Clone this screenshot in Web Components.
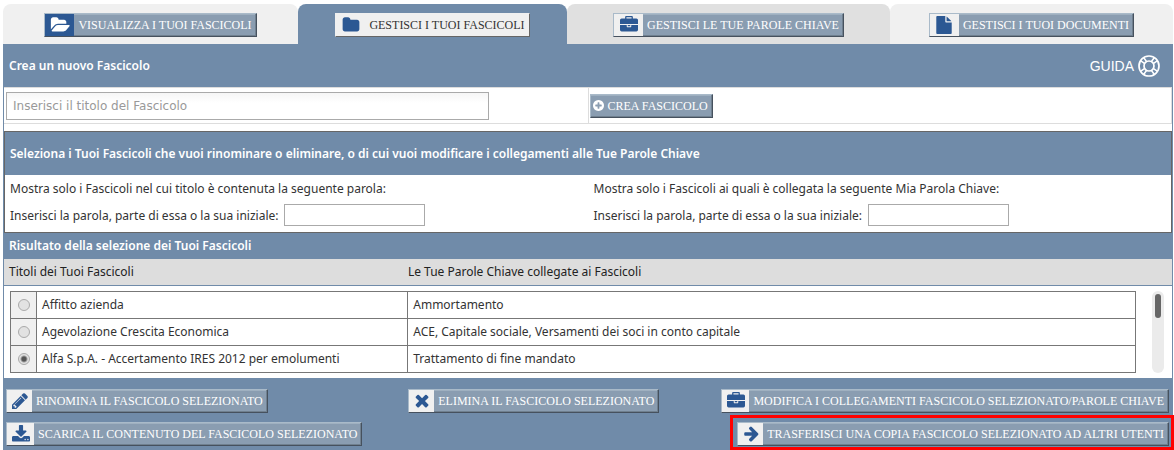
<!DOCTYPE html>
<html lang="it">
<head>
<meta charset="utf-8">
<title>Gestisci i tuoi fascicoli</title>
<style>
    body{
    margin: 0;
    background: white;
    color: #333;
    font-family: "Noto Sans", "Open Sans", sans-serif;
    font-size: 12px;
    }
</style>
</head>
<body>
<fascicoli-pagina></fascicoli-pagina>

<script>
const icons = {
    "folder-open": ["0 0 1943 1792", "M1943 952q0 31-31 66l-336 396q-43 51-120.5 86.5t-143.5 35.5h-1088q-34 0-60.5-13t-26.5-43q0-31 31-66l336-396q43-51 120.5-86.5t143.5-35.5h1088q34 0 60.5 13t26.5 43zm-343-344v160h-832q-94 0-197 47.5t-164 119.5l-337 396-5 6q0-4-.5-12.5t-.5-12.5v-960q0-92 66-158t158-66h320q92 0 158 66t66 158v32h544q92 0 158 66t66 158z"],
    "folder": ["64 0 1664 1792", "M1728 608v704q0 92-66 158t-158 66h-1216q-92 0-158-66t-66-158v-960q0-92 66-158t158-66h320q92 0 158 66t66 158v32h672q92 0 158 66t66 158z"],
    "briefcase": ["0 0 1792 1792", "M640 256h512v-128h-512v128zm1152 640v480q0 66-47 113t-113 47h-1472q-66 0-113-47t-47-113v-480h672v160q0 26 19 45t45 19h320q26 0 45-19t19-45v-160h672zm-768 0v128h-256v-128h256zm768-480v384h-1792v-384q0-66 47-113t113-47h352v-160q0-40 28-68t68-28h576q40 0 68 28t28 68v160h352q66 0 113 47t47 113z"],
    "file": ["0 0 1536 1792", "M1024 512v-472q22 14 36 28l408 408q14 14 28 36h-472zm-128 32q0 40 28 68t68 28h544v1056q0 40-28 68t-68 28h-1344q-40 0-68-28t-28-68v-1600q0-40 28-68t68-28h800v544z"],
    "pencil": ["128 128 1536 1536", "M491 1536l91-91-235-235-91 91v107h128v128h107zm523-928q0-22-22-22-10 0-17 7l-542 542q-7 7-7 17 0 22 22 22 10 0 17-7l542-542q7-7 7-17zm-54-192l416 416-832 832h-416v-416zm683 96q0 53-37 90l-166 166-416-416 166-165q36-38 90-38 53 0 91 38l235 234q37 39 37 91z"],
    "times": ["147 207 1490 1490", "M1490 1322q0 40-28 68l-136 136q-28 28-68 28t-68-28l-294-294-294 294q-28 28-68 28t-68-28l-136-136q-28-28-28-68t28-68l294-294-294-294q-28-28-28-68t28-68l136-136q28-28 68-28t68 28l294 294 294-294q28-28 68-28t68 28l136 136q28 28 28 68t-28 68l-294 294 294 294q28 28 28 68z"],
    "arrow": ["0 128 1664 1664", "M1600 960q0 54-37 91l-651 651q-39 37-91 37-51 0-90-37l-75-75q-38-38-38-91t38-91l293-293h-704q-52 0-84.5-37.5t-32.5-90.5v-128q0-53 32.5-90.5t84.5-37.5h704l-293-294q-38-36-38-90t38-90l75-75q38-38 90-38 53 0 91 38l651 651q37 35 37 90z"],
    "download": ["64 0 1664 1664", "M1344 1344q0-26-19-45t-45-19-45 19-19 45 19 45 45 19 45-19 19-45zm256 0q0-26-19-45t-45-19-45 19-19 45 19 45 45 19 45-19 19-45zm128-224v320q0 40-28 68t-68 28h-1472q-40 0-68-28t-28-68v-320q0-40 28-68t68-28h465l135 136q58 56 136 56t136-56l136-136h464q40 0 68 28t28 68zm-325-569q17 41-14 70l-448 448q-18 19-45 19t-45-19l-448-448q-31-29-14-70 17-39 59-39h256v-448q0-26 19-45t45-19h256q26 0 45 19t19 45v448h256q42 0 59 39z"],
    "plus": ["128 128 1536 1536", "M1344 960v-128q0-26-19-45t-45-19h-256v-256q0-26-19-45t-45-19h-128q-26 0-45 19t-19 45v256h-256q-26 0-45 19t-19 45v128q0 26 19 45t45 19h256v256q0 26 19 45t45 19h128q26 0 45-19t19-45v-256h256q26 0 45-19t19-45zm320-64q0 209-103 385.5t-279.5 279.5-385.5 103-385.5-103-279.5-279.5-103-385.5 103-385.5 279.5-279.5 385.5-103 385.5 103 279.5 279.5 103 385.5z"]
}

function makeTemplate(html) {
    const template = document.createElement("template")
    template.innerHTML = html
    return template
}

// button with an icon box on the left
const buttonTemplate = makeTemplate(`
    <style>
        :host{
        display: block;
        }
        button{
        display: flex;
        align-items: stretch;
        box-sizing: border-box;
        height: 24px;
        padding: 0;
        border: 1px solid;
        border-color: #a9bac9 #46515e #46515e #a9bac9;
        background: #8a9db1;
        box-shadow: inset -1px -1px #70808f, inset 0 1px #9fb0c0;
        color: white;
        font-family: "Liberation Serif", serif;
        font-size: 12px;
        line-height: 22px;
        white-space: nowrap;
        cursor: pointer;
        }
        .box{
        display: flex;
        align-items: center;
        justify-content: center;
        width: 25px;
        background: #f0f0f0;
        color: #2c5893;
        }
        svg{
        width: 16px;
        height: 16px;
        fill: currentColor;
        }
        .text{
        padding: 0 4px;
        }
        :host([size="wide"]) .box{
        width: 29px;
        }
        :host([size="wide"]) svg, :host([size="large"]) svg{
        width: 18px;
        height: 18px;
        }
        :host([size="large"]) .box{
        width: 27px;
        }
        :host([tone="blue"]) .box{
        background: #2c5893;
        color: white;
        }
        :host([tone="blue"]) svg{
        width: 20px;
        }
        :host([tone="light"]) button{
        background: #f0f0f0;
        box-shadow: none;
        color: #333;
        border-color: #f0f0f0 #666 #666 #f0f0f0;
        }
        :host([tone="plain"]) .box{
        width: 16px;
        background: none;
        color: white;
        }
        :host([tone="plain"]) svg{
        width: 11px;
        height: 11px;
        }
        :host([tone="plain"]) .text{
        padding-left: 1px;
        }
    </style>
    <button type="button"><span class="box"><svg aria-hidden="true"><path/></svg></span><span class="text"><slot></slot></span></button>`)

class IconaBottone extends HTMLElement {
    constructor(){
        super()
        const shadow = this.attachShadow({ mode: "open" })
        shadow.append(buttonTemplate.content.cloneNode(true))
    }
    connectedCallback(){
        const [box, path] = icons[this.getAttribute("icon")]
        this.shadowRoot.querySelector("svg").setAttribute("viewBox", box)
        this.shadowRoot.querySelector("path").setAttribute("d", path)
    }
}
customElements.define("icona-bottone", IconaBottone)


// tab
const tabTemplate = makeTemplate(`
    <style>
        :host{
        display: flex;
        justify-content: center;
        box-sizing: border-box;
        height: 40px;
        padding-top: 9px;
        border-radius: 8px 8px 0 0;
        background: #f0f0f0;
        }
        :host([shade]){
        background: #e0e0e0;
        }
        :host([active]){
        background: #708ba9;
        }
    </style>
    <slot></slot>`)

class SchedaTab extends HTMLElement {
    constructor(){
        super()
        this.attachShadow({ mode: "open" }).append(tabTemplate.content.cloneNode(true))
    }
}
customElements.define("scheda-tab", SchedaTab)


// blue title bar
const barTemplate = makeTemplate(`
    <style>
        :host{
        display: flex;
        align-items: center;
        justify-content: space-between;
        box-sizing: border-box;
        min-height: 43px;
        padding: 0 12px 0 5px;
        background: #708ba9;
        color: white;
        }
        :host([small]){
        min-height: 26px;
        }
        h2{
        margin: 0;
        font-size: 12px;
        line-height: 18px;
        font-weight: 600;
        }
    </style>
    <h2><slot></slot></h2><slot name="end"></slot>`)

class BarraTitolo extends HTMLElement {
    constructor(){
        super()
        this.attachShadow({ mode: "open" }).append(barTemplate.content.cloneNode(true))
    }
}
customElements.define("barra-titolo", BarraTitolo)


const guideTemplate = makeTemplate(`
    <style>
        :host{
        display: block;
        }
        a{
        display: flex;
        align-items: center;
        gap: 4px;
        color: white;
        font-family: "Liberation Sans", sans-serif;
        font-size: 14px;
        text-decoration: none;
        }
        svg{
        width: 22px;
        height: 22px;
        fill: none;
        stroke: white;
        }
    </style>
    <a href="#guida">GUIDA
        <svg viewBox="0 0 22 22" aria-hidden="true">
            <circle cx="11" cy="11" r="10" stroke-width="1.7"/>
            <circle cx="11" cy="11" r="5" stroke-width="1.7"/>
            <path stroke-width="1.5" d="M5.8 2.8l2.9 4M2.8 5.8l4 2.9M16.2 2.8l-2.9 4M19.2 5.8l-4 2.9M5.8 19.2l2.9-4M2.8 16.2l4-2.9M16.2 19.2l-2.9-4M19.2 16.2l-4-2.9"/>
        </svg>
    </a>`)

class GuidaLink extends HTMLElement {
    constructor(){
        super()
        this.attachShadow({ mode: "open" }).append(guideTemplate.content.cloneNode(true))
    }
}
customElements.define("guida-link", GuidaLink)


// filter: a line of text and a labelled field
const filterTemplate = makeTemplate(`
    <style>
        :host{
        display: block;
        }
        p{
        margin: 0;
        line-height: 28px;
        }
        div{
        display: flex;
        align-items: center;
        gap: 6px;
        height: 24px;
        }
        input{
        box-sizing: border-box;
        width: 141px;
        height: 22px;
        border: 1px solid #aaa;
        background: white;
        font: inherit;
        }
    </style>
    <p><slot></slot></p>
    <div><label for="parola">Inserisci la parola, parte di essa o la sua iniziale:</label><input id="parola" type="text"></div>`)

class FiltroParola extends HTMLElement {
    constructor(){
        super()
        this.attachShadow({ mode: "open" }).append(filterTemplate.content.cloneNode(true))
    }
}
customElements.define("filtro-parola", FiltroParola)


// results
const fascicoli = [
    ["Affitto azienda", "Ammortamento"],
    ["Agevolazione Crescita Economica", "ACE, Capitale sociale, Versamenti dei soci in conto capitale"],
    ["Alfa S.p.A. - Accertamento IRES 2012 per emolumenti", "Trattamento di fine mandato"]
]

const tableTemplate = makeTemplate(`
    <style>
        :host{
        display: flex;
        gap: 16px;
        padding: 5px 8px 5px 6px;
        border-top: 1px solid #708ba9;
        background: white;
        }
        table{
        flex: 1;
        table-layout: fixed;
        border-collapse: collapse;
        border: 1px solid #444;
        }
        td{
        box-sizing: border-box;
        height: 27px;
        padding: 0 5px;
        border: 1px solid #777;
        line-height: 20px;
        }
        td:first-child{
        padding: 0;
        background: #f0f0f0;
        text-align: center;
        }
        .radio{
        width: 26px;
        }
        .title{
        width: 33%;
        }
        input{
        appearance: none;
        display: block;
        box-sizing: border-box;
        width: 12px;
        height: 12px;
        margin: 0 auto;
        border: 1px solid #aaa;
        border-radius: 50%;
        background: #e2e2e2;
        }
        input:checked{
        background: radial-gradient(circle, #555 0 2px, #e2e2e2 4px);
        }
        .scroll{
        box-sizing: border-box;
        width: 12px;
        padding: 3px;
        border-radius: 6px;
        background: #ebebeb;
        }
        .thumb{
        height: 24px;
        border-radius: 3px;
        background: #666;
        }
    </style>
    <table>
        <colgroup><col class="radio"><col class="title"><col></colgroup>
        <tbody></tbody>
    </table>
    <div class="scroll"><div class="thumb"></div></div>`)

class TabellaFascicoli extends HTMLElement {
    constructor(){
        super()
        const shadow = this.attachShadow({ mode: "open" })
        shadow.append(tableTemplate.content.cloneNode(true))
        shadow.querySelector("tbody").innerHTML = fascicoli.map(([titolo, parole], i) => `
            <tr>
                <td><input type="radio" name="fascicolo" id="f${i}" ${i === 2 ? "checked" : ""}></td>
                <td><label for="f${i}">${titolo}</label></td>
                <td>${parole}</td>
            </tr>`).join("")
    }
}
customElements.define("tabella-fascicoli", TabellaFascicoli)


const pageTemplate = makeTemplate(`
    <style>
        :host{
        display: block;
        padding: 4px 1px 0 3px;
        }
        nav{
        display: grid;
        grid-template-columns: 295fr 269fr 323fr 283fr;
        }
        main{
        border: 0 solid #708ba9;
        border-width: 0 1px;
        }
        .new{
        display: grid;
        grid-template-columns: 1fr 1fr;
        margin-bottom: 7px;
        border: 1px solid #ddd;
        border-left: 0;
        }
        .new div{
        display: flex;
        align-items: center;
        height: 35px;
        padding-left: 2px;
        }
        .new div + div{
        padding-left: 1px;
        border-left: 1px solid #ddd;
        }
        .new input{
        box-sizing: border-box;
        width: 83%;
        height: 28px;
        padding: 0 6px;
        border: 1px solid #aaa;
        background: linear-gradient(#f6f6f6, white 10px);
        font-family: "DejaVu Sans", sans-serif;
        font-size: 12px;
        }
        .new input::placeholder{
        color: #999;
        }
        .filters{
        border: 1px solid #666;
        }
        .filters .pair{
        display: grid;
        grid-template-columns: 1fr 1fr;
        column-gap: 6px;
        padding: 0 0 5px 5px;
        }
        .heads{
        display: grid;
        grid-template-columns: 34.3% 1fr;
        padding-left: 5px;
        background: #ddd;
        color: #222;
        line-height: 26px;
        }
        .actions{
        display: grid;
        grid-template-columns: 34.5% 1fr auto;
        row-gap: 2px;
        padding: 8px 0 0 2px;
        background: #708ba9;
        }
        .actions > *{
        padding-top: 3px;
        }
        .modify{
        padding-right: 3px;
        }
        .last{
        grid-column: 1 / -1;
        display: flex;
        justify-content: space-between;
        padding: 0;
        }
        .last icona-bottone{
        margin-top: 7px;
        }
        .marked{
        margin-right: -2px;
        padding: 4px 2px 1px 4px;
        border: 3px solid red;
        }
        .marked icona-bottone{
        margin: 0;
        }
    </style>
    <nav>
        <scheda-tab><icona-bottone icon="folder-open" size="wide" tone="blue">VISUALIZZA I TUOI FASCICOLI</icona-bottone></scheda-tab>
        <scheda-tab active><icona-bottone icon="folder" size="wide" tone="light">GESTISCI I TUOI FASCICOLI</icona-bottone></scheda-tab>
        <scheda-tab shade><icona-bottone icon="briefcase" size="wide">GESTISCI LE TUE PAROLE CHIAVE</icona-bottone></scheda-tab>
        <scheda-tab><icona-bottone icon="file" size="wide">GESTISCI I TUOI DOCUMENTI</icona-bottone></scheda-tab>
    </nav>
    <main>
        <barra-titolo>Crea un nuovo Fascicolo<guida-link slot="end"></guida-link></barra-titolo>
        <div class="new">
            <div><input type="text" placeholder="Inserisci il titolo del Fascicolo" aria-label="Titolo del Fascicolo"></div>
            <div><icona-bottone icon="plus" tone="plain">CREA FASCICOLO</icona-bottone></div>
        </div>
        <section class="filters">
            <barra-titolo>Seleziona i Tuoi Fascicoli che vuoi rinominare o eliminare, o di cui vuoi modificare i collegamenti alle Tue Parole Chiave</barra-titolo>
            <div class="pair">
                <filtro-parola>Mostra solo i Fascicoli nel cui titolo è contenuta la seguente parola:</filtro-parola>
                <filtro-parola>Mostra solo i Fascicoli ai quali è collegata la seguente Mia Parola Chiave:</filtro-parola>
            </div>
        </section>
        <barra-titolo small>Risultato della selezione dei Tuoi Fascicoli</barra-titolo>
        <div class="heads"><span>Titoli dei Tuoi Fascicoli</span><span>Le Tue Parole Chiave collegate ai Fascicoli</span></div>
        <tabella-fascicoli></tabella-fascicoli>
        <div class="actions">
            <icona-bottone icon="pencil">RINOMINA IL FASCICOLO SELEZIONATO</icona-bottone>
            <icona-bottone icon="times">ELIMINA IL FASCICOLO SELEZIONATO</icona-bottone>
            <icona-bottone class="modify" icon="briefcase" size="large">MODIFICA I COLLEGAMENTI FASCICOLO SELEZIONATO/PAROLE CHIAVE</icona-bottone>
            <div class="last">
                <icona-bottone icon="download" size="large">SCARICA IL CONTENUTO DEL FASCICOLO SELEZIONATO</icona-bottone>
                <div class="marked"><icona-bottone icon="arrow">TRASFERISCI UNA COPIA FASCICOLO SELEZIONATO AD ALTRI UTENTI</icona-bottone></div>
            </div>
        </div>
    </main>`)

class FascicoliPagina extends HTMLElement {
    constructor(){
        super()
        this.attachShadow({ mode: "open" }).append(pageTemplate.content.cloneNode(true))
    }
}
customElements.define("fascicoli-pagina", FascicoliPagina)
</script>
</body>
</html>
